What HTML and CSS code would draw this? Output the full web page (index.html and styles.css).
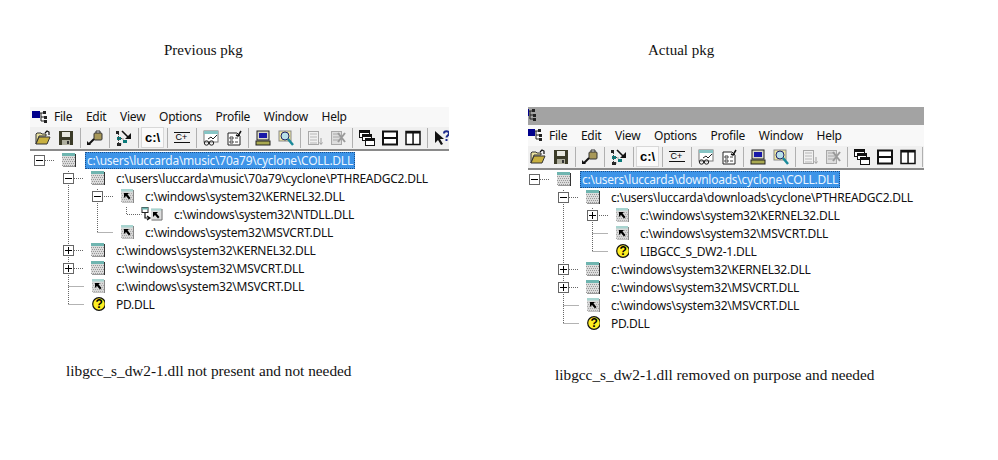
FILE: index.html
```html
<!DOCTYPE html>
<html lang="en">
<head>
  <meta charset="UTF-8" />
  <title>Dependency Walker - pkg comparison</title>
  <link rel="stylesheet" href="styles.css">
</head>
<body>

<svg class="sprites" aria-hidden="true">
  <symbol id="i-app" viewBox="0 0 16 14">
    <rect x="0" y="1" width="8" height="7" fill="#00008c"/>
    <path d="M8 3h3M9 3v8h3M9 7h3" fill="none" stroke="#222"/>
    <rect x="11" y="1" width="3" height="3" fill="#222"/>
    <rect x="12" y="6" width="3" height="3" fill="#222"/>
    <rect x="12" y="10" width="3" height="3" fill="#222"/>
  </symbol>
  <symbol id="i-open" viewBox="0 0 16 16">
    <path d="M1 14V4l1-1h4l1 1h4v2H4L1 14z" fill="#e8e0a0" stroke="#333"/>
    <path d="M1 14l3-7h11l-3 7z" fill="#c8b040" stroke="#333"/>
    <path d="M10 3l2-2 2 1v3" fill="none" stroke="#111" stroke-width="1.2"/>
  </symbol>
  <symbol id="i-save" viewBox="0 0 16 16">
    <rect x="1" y="1" width="14" height="14" fill="#3c3c28"/>
    <rect x="4" y="2" width="8" height="5" fill="#e8e8e0"/>
    <rect x="4" y="10" width="8" height="5" fill="#b0b0a0"/>
    <rect x="9" y="11" width="2" height="3" fill="#333"/>
  </symbol>
  <symbol id="i-pin" viewBox="0 0 16 16">
    <rect x="7" y="3" width="8" height="7" rx="1" fill="#a89858" stroke="#333"/>
    <path d="M9 3V1h4v2" fill="none" stroke="#333"/>
    <path d="M7 9L2 14" stroke="#111" stroke-width="2"/>
    <path d="M0 11v4h4z" fill="#111"/>
  </symbol>
  <symbol id="i-tree" viewBox="0 0 16 16">
    <rect x="0" y="1" width="3" height="3" fill="#222"/>
    <rect x="1" y="7" width="4" height="3" fill="#0a7a7a"/>
    <rect x="1" y="13" width="4" height="3" fill="#222"/>
    <rect x="7" y="10" width="4" height="3" fill="#0a7a7a"/>
    <path d="M2.500 4v10h3M5 8.500h2v2" fill="none" stroke="#444" stroke-dasharray="1 1"/>
    <path d="M6 1l6 6" stroke="#111" stroke-width="1.600"/>
    <path d="M15 3v6h-6z" fill="#111"/>
  </symbol>
  <symbol id="i-watch" viewBox="0 0 16 16">
    <rect x="1" y="1" width="14" height="11" fill="#fff" stroke="#777"/>
    <rect x="1" y="1" width="14" height="3" fill="#86c4c4"/>
    <circle cx="3.500" cy="13" r="2.200" fill="none" stroke="#222"/>
    <circle cx="8.500" cy="13" r="2.200" fill="none" stroke="#222"/>
    <path d="M5.500 12.500h1M5 9l3-2 2 2 4-4" fill="none" stroke="#222"/>
  </symbol>
  <symbol id="i-sheet" viewBox="0 0 16 16">
    <path d="M2 3h9l3 3v9H2z" fill="#fff" stroke="#222"/>
    <path d="M4 7h3v2H4zM4 11h3v2H4zM9 8h3M9 12h3" fill="none" stroke="#444"/>
    <path d="M10 5l2 1 3-5" fill="none" stroke="#111" stroke-width="1.500"/>
  </symbol>
  <symbol id="i-pc" viewBox="0 0 16 16">
    <rect x="2" y="1" width="12" height="9" fill="#d8d8c8" stroke="#222"/>
    <rect x="4" y="3" width="8" height="5" fill="#1818a8"/>
    <rect x="1" y="11" width="14" height="4" fill="#a8a850" stroke="#222"/>
  </symbol>
  <symbol id="i-find" viewBox="0 0 16 16">
    <rect x="1" y="1" width="12" height="10" fill="#f0e8a0" stroke="#888"/>
    <circle cx="7" cy="6" r="4" fill="#b8e0e8" stroke="#226"/>
    <path d="M10 9l5 6" stroke="#1a8a9a" stroke-width="2.500"/>
  </symbol>
  <symbol id="i-off1" viewBox="0 0 16 16">
    <rect x="1.500" y="1.500" width="10" height="13" fill="none" stroke="#a8a8a8"/>
    <path d="M3 4h7M3 7h7M3 10h7M3 13h7" stroke="#b8b8b8"/>
    <path d="M14 8v6M12.500 12.500l1.500 2 1.500-2" fill="none" stroke="#a0a0a0"/>
  </symbol>
  <symbol id="i-off2" viewBox="0 0 16 16">
    <rect x="1.500" y="1.500" width="10" height="13" fill="#ddd" stroke="#a8a8a8"/>
    <path d="M3 4h7M3 7h7M3 10h7" stroke="#a8a8a8"/>
    <path d="M8 3l7 9M15 3l-7 9" stroke="#9a9a9a" stroke-width="2"/>
  </symbol>
  <symbol id="i-cascade" viewBox="0 0 16 16">
    <rect x="0.500" y="0.500" width="10" height="7" fill="#fff" stroke="#111"/>
    <rect x="0.500" y="0.500" width="10" height="2.500" fill="#111"/>
    <rect x="3.500" y="4.500" width="9" height="6" fill="#fff" stroke="#111"/>
    <rect x="3.500" y="4.500" width="9" height="2.500" fill="#111"/>
    <rect x="6.500" y="8.500" width="9" height="7" fill="#fff" stroke="#111"/>
    <rect x="6.500" y="8.500" width="9" height="2.500" fill="#111"/>
  </symbol>
  <symbol id="i-rows" viewBox="0 0 16 16">
    <rect x="1" y="1.500" width="14" height="13" fill="#fff" stroke="#111" stroke-width="2"/>
    <rect x="1" y="7" width="14" height="2" fill="#111"/>
  </symbol>
  <symbol id="i-cols" viewBox="0 0 16 16">
    <rect x="1" y="1.500" width="14" height="13" fill="#fff" stroke="#111" stroke-width="1.500"/>
    <rect x="1" y="1" width="14" height="2.500" fill="#111"/>
    <rect x="7.300" y="2" width="1.500" height="12" fill="#111"/>
  </symbol>
  <symbol id="i-help" viewBox="0 0 16 16">
    <path d="M1 1v12l3-3 3 5 2-1-3-5h4z" fill="#111"/>
    <path d="M10 3.500c0-3 5-3 5 0 0 2-2.500 2-2.500 4M12.500 9v2" fill="none" stroke="#1c2a8c" stroke-width="2"/>
  </symbol>
  <symbol id="i-module" viewBox="0 0 14 14">
    <rect x="0" y="0" width="13" height="13" fill="#dcdcdc"/>
    <path d="M0 4.500h13M1 6.500h12M0 8.500h13M1 10.500h12M0 12.500h13" fill="none" stroke="#989898" stroke-dasharray="1 1"/>
    <rect x="0" y="0" width="13" height="3" fill="#6fb5b0"/>
    <path d="M13.500 1v13H1" fill="none" stroke="#333"/>
  </symbol>
  <symbol id="i-shortcut" viewBox="0 0 14 14">
    <rect x="1" y="0" width="12" height="13" fill="#d8d8d8"/>
    <path d="M1 4.500h12M2 6.500h11M1 8.500h12M2 10.500h11M1 12.500h12" fill="none" stroke="#aaa" stroke-dasharray="1 1"/>
    <rect x="1" y="0" width="12" height="2.500" fill="#a8d4d0"/>
    <path d="M13.500 1v13H2" fill="none" stroke="#888"/>
    <path d="M4 4h5L7.500 5.500 10.500 9 9 10.500 6 7 4 9z" fill="#000"/>
  </symbol>
  <symbol id="i-fwd" viewBox="0 0 22 14">
    <rect x="1" y="0.500" width="6" height="5" fill="#fff" stroke="#222"/>
    <rect x="1" y="0.500" width="6" height="2" fill="#6fb5b0"/>
    <path d="M4 6v5h4M6 9l3 2-3 2" fill="none" stroke="#111" stroke-width="1.200"/>
    <rect x="10" y="1.500" width="10.500" height="11" fill="#dedede"/>
    <rect x="10" y="1.500" width="10.500" height="2" fill="#a8d4d0"/>
    <path d="M21 2v11H10.500" fill="none" stroke="#666"/>
    <path d="M12 5h5L15.500 6.500 18.500 10 17 11.500 14 8 12 10z" fill="#000"/>
  </symbol>
  <symbol id="i-missing" viewBox="0 1 14 14">
    <circle cx="8" cy="8" r="6.300" fill="#ffee22" stroke="#111" stroke-width="1.200"/>
    <text x="8" y="12.300" text-anchor="middle" font-family="Liberation Sans, sans-serif" font-size="12" font-weight="700" fill="#000">?</text>
  </symbol>
</svg>

<div class="page">

  <section class="pkg">
    <h2 class="caption caption-prev">Previous pkg</h2>
    <div class="depends">
      <div class="depends-inner">
        <div class="menubar">
          <svg class="app-icon"><use href="#i-app"/></svg>
          <span>File</span><span>Edit</span><span>View</span><span>Options</span><span>Profile</span><span>Window</span><span>Help</span>
        </div>
        <div class="toolbar">
          <span class="tb"><svg><use href="#i-open"/></svg></span>
          <span class="tb"><svg><use href="#i-save"/></svg></span>
          <i class="sep"></i>
          <span class="tb"><svg><use href="#i-pin"/></svg></span>
          <i class="sep"></i>
          <span class="tb"><svg><use href="#i-tree"/></svg></span>
          <i class="sep"></i>
          <span class="tb tb-on tb-path">c:\</span>
          <i class="sep"></i>
          <span class="tb"><span class="tb-cpp">C+</span></span>
          <i class="sep"></i>
          <span class="tb"><svg><use href="#i-watch"/></svg></span>
          <span class="tb"><svg><use href="#i-sheet"/></svg></span>
          <i class="sep"></i>
          <span class="tb"><svg><use href="#i-pc"/></svg></span>
          <span class="tb"><svg><use href="#i-find"/></svg></span>
          <i class="sep"></i>
          <span class="tb"><svg><use href="#i-off1"/></svg></span>
          <span class="tb"><svg><use href="#i-off2"/></svg></span>
          <i class="sep"></i>
          <span class="tb"><svg><use href="#i-cascade"/></svg></span>
          <span class="tb"><svg><use href="#i-rows"/></svg></span>
          <span class="tb"><svg><use href="#i-cols"/></svg></span>
          <i class="sep"></i>
          <span class="tb"><svg><use href="#i-help"/></svg></span>
        </div>
        <div class="tree">
          <svg class="tree-lines">
            <path d="M15 9.500h10M38.500 20V153.500M44 27.500h10M67.500 38V81.500M74 45.500h9M96.500 56V63.500h15M67.500 81.500h15M44 99.500h10M44 117.500h10M38.500 135.500h15M38.500 153.500h15"/>
          </svg>
          <div class="row lvl0"><b class="exp"></b><svg class="ic"><use href="#i-module"/></svg><span class="name selected">c:\users\luccarda\music\70a79\cyclone\COLL.DLL</span></div>
          <div class="row lvl1"><b class="exp"></b><svg class="ic"><use href="#i-module"/></svg><span class="name">c:\users\luccarda\music\70a79\cyclone\PTHREADGC2.DLL</span></div>
          <div class="row lvl2"><b class="exp"></b><svg class="ic"><use href="#i-shortcut"/></svg><span class="name">c:\windows\system32\KERNEL32.DLL</span></div>
          <div class="row lvl3"><b class="exp-none"></b><svg class="ic ic-fwd"><use href="#i-fwd"/></svg><span class="name">c:\windows\system32\NTDLL.DLL</span></div>
          <div class="row lvl2"><b class="exp-none"></b><svg class="ic"><use href="#i-shortcut"/></svg><span class="name">c:\windows\system32\MSVCRT.DLL</span></div>
          <div class="row lvl1"><b class="exp plus"></b><svg class="ic"><use href="#i-module"/></svg><span class="name">c:\windows\system32\KERNEL32.DLL</span></div>
          <div class="row lvl1"><b class="exp plus"></b><svg class="ic"><use href="#i-module"/></svg><span class="name">c:\windows\system32\MSVCRT.DLL</span></div>
          <div class="row lvl1"><b class="exp-none"></b><svg class="ic"><use href="#i-shortcut"/></svg><span class="name">c:\windows\system32\MSVCRT.DLL</span></div>
          <div class="row lvl1"><b class="exp-none"></b><svg class="ic"><use href="#i-missing"/></svg><span class="name">PD.DLL</span></div>
        </div>
      </div>
    </div>
    <p class="caption note note-prev">libgcc_s_dw2-1.dll not present and not needed</p>
  </section>

  <section class="pkg pkg-actual">
    <h2 class="caption caption-actual">Actual pkg</h2>
    <div class="depends">
      <div class="titlebar"><svg class="app-icon"><use href="#i-app"/></svg></div>
      <div class="depends-inner">
        <div class="menubar">
          <svg class="app-icon"><use href="#i-app"/></svg>
          <span>File</span><span>Edit</span><span>View</span><span>Options</span><span>Profile</span><span>Window</span><span>Help</span>
        </div>
        <div class="toolbar">
          <span class="tb"><svg><use href="#i-open"/></svg></span>
          <span class="tb"><svg><use href="#i-save"/></svg></span>
          <i class="sep"></i>
          <span class="tb"><svg><use href="#i-pin"/></svg></span>
          <i class="sep"></i>
          <span class="tb"><svg><use href="#i-tree"/></svg></span>
          <i class="sep"></i>
          <span class="tb tb-on tb-path">c:\</span>
          <i class="sep"></i>
          <span class="tb"><span class="tb-cpp">C+</span></span>
          <i class="sep"></i>
          <span class="tb"><svg><use href="#i-watch"/></svg></span>
          <span class="tb"><svg><use href="#i-sheet"/></svg></span>
          <i class="sep"></i>
          <span class="tb"><svg><use href="#i-pc"/></svg></span>
          <span class="tb"><svg><use href="#i-find"/></svg></span>
          <i class="sep"></i>
          <span class="tb"><svg><use href="#i-off1"/></svg></span>
          <span class="tb"><svg><use href="#i-off2"/></svg></span>
          <i class="sep"></i>
          <span class="tb"><svg><use href="#i-cascade"/></svg></span>
          <span class="tb"><svg><use href="#i-rows"/></svg></span>
          <span class="tb"><svg><use href="#i-cols"/></svg></span>
          <i class="sep"></i>
        </div>
        <div class="tree">
          <svg class="tree-lines">
            <path d="M15 9.500h10M38.500 20V153.500M44 27.500h10M67.500 38V81.500M74 45.500h9M67.500 63.500h15M67.500 81.500h15M44 99.500h10M44 117.500h10M38.500 135.500h15M38.500 153.500h15"/>
          </svg>
          <div class="row lvl0"><b class="exp"></b><svg class="ic"><use href="#i-module"/></svg><span class="name selected">c:\users\luccarda\downloads\cyclone\COLL.DLL</span></div>
          <div class="row lvl1"><b class="exp"></b><svg class="ic"><use href="#i-module"/></svg><span class="name">c:\users\luccarda\downloads\cyclone\PTHREADGC2.DLL</span></div>
          <div class="row lvl2"><b class="exp plus"></b><svg class="ic"><use href="#i-shortcut"/></svg><span class="name">c:\windows\system32\KERNEL32.DLL</span></div>
          <div class="row lvl2"><b class="exp-none"></b><svg class="ic"><use href="#i-shortcut"/></svg><span class="name">c:\windows\system32\MSVCRT.DLL</span></div>
          <div class="row lvl2"><b class="exp-none"></b><svg class="ic"><use href="#i-missing"/></svg><span class="name">LIBGCC_S_DW2-1.DLL</span></div>
          <div class="row lvl1"><b class="exp plus"></b><svg class="ic"><use href="#i-module"/></svg><span class="name">c:\windows\system32\KERNEL32.DLL</span></div>
          <div class="row lvl1"><b class="exp plus"></b><svg class="ic"><use href="#i-module"/></svg><span class="name">c:\windows\system32\MSVCRT.DLL</span></div>
          <div class="row lvl1"><b class="exp-none"></b><svg class="ic"><use href="#i-shortcut"/></svg><span class="name">c:\windows\system32\MSVCRT.DLL</span></div>
          <div class="row lvl1"><b class="exp-none"></b><svg class="ic"><use href="#i-missing"/></svg><span class="name">PD.DLL</span></div>
        </div>
      </div>
    </div>
    <p class="caption note note-actual">libgcc_s_dw2-1.dll removed on purpose and needed</p>
  </section>

</div>

</body>
</html>
```

FILE: styles.css
```css
* {
  box-sizing: border-box;
}

html, body {
  margin: 0;
  padding: 0;
  height: 100%;
  overflow: hidden;
  background: #fff;
}

.sprites {
  display: none;
}

.page {
  display: grid;
  grid-template-columns: 419px 396px;
  column-gap: 79px;
  padding: 42px 0 0 30px;
}

/* captions */
.caption {
  margin: 0;
  font-family: "Liberation Serif", serif;
  font-size: 15px;
  font-weight: 400;
  line-height: 16px;
  color: #111;
  white-space: nowrap;
}

.note {
  font-size: 15.3px;
}

.caption-prev { padding-left: 134px; margin-bottom: 49px; }
.caption-actual { padding-left: 120px; margin-bottom: 49px; }
.note-prev { margin: 49px 0 0 36px; }
.note-actual { margin: 34px 0 0 27px; }

/* app window */
.depends {
  overflow: hidden;
  font-family: "Noto Sans", sans-serif;
  font-size: 12px;
  letter-spacing: -0.25px;
  color: #111;
}

.pkg-actual .depends-inner {
  margin-left: -3px;
  width: 419px;
}

.titlebar {
  height: 18px;
  padding-top: 1px;
  background: #a3a3a3;
}

.titlebar .app-icon {
  margin-left: -7px;
}

.app-icon {
  display: block;
  width: 16px;
  height: 14px;
  flex: none;
}

.menubar {
  display: flex;
  align-items: center;
  height: 20px;
  padding: 0 0 1px 2px;
  background: #f8f8f8;
}

.pkg-actual .menubar {
  height: 21px;
}

.menubar span {
  padding: 0 6px;
  margin-right: 1.7px;
}

.toolbar {
  display: flex;
  align-items: center;
  height: 24px;
  padding: 0 0 1px 1px;
  background: #f0f0f0;
  border-bottom: 2px solid #8a8a8a;
}

.tb {
  display: flex;
  align-items: center;
  justify-content: center;
  width: 23px;
  height: 21px;
  flex: none;
}

.tb svg {
  width: 16px;
  height: 16px;
}

.tb-on {
  background: #fafafa;
  border: 1px solid #d8d8d8;
}

.tb-path {
  font-family: "Liberation Sans", sans-serif;
  font-size: 13px;
  font-weight: 700;
  letter-spacing: 0;
  color: #000;
}

.tb-cpp {
  width: 16px;
  font-family: "Liberation Sans", sans-serif;
  font-size: 9px;
  line-height: 9px;
  letter-spacing: 0;
  text-align: center;
  border-top: 1px solid #111;
  border-bottom: 1px solid #111;
  color: #000;
}

.sep {
  width: 6px;
  height: 20px;
  flex: none;
  background: linear-gradient(#b0b0b0, #b0b0b0) center / 1px 100% no-repeat;
}

/* dependency tree */
.tree {
  position: relative;
  background: #fff;
  padding-bottom: 1px;
}

.tree-lines {
  position: absolute;
  top: 0;
  left: 0;
  width: 100%;
  height: 100%;
}

.tree-lines path {
  fill: none;
  stroke: #666;
  stroke-dasharray: 1 1;
}

.row {
  position: relative;
  display: flex;
  align-items: center;
  height: 18px;
  white-space: nowrap;
}

.lvl0 { padding-left: 4px; }
.lvl1 { padding-left: 33px; }
.lvl2 { padding-left: 62px; }
.lvl3 { padding-left: 91px; }

.exp,
.exp-none {
  position: relative;
  display: block;
  width: 11px;
  height: 11px;
  flex: none;
  margin-right: 17px;
}

.exp {
  background: #fff;
  border: 1px solid #666;
}

.exp::before {
  content: "";
  position: absolute;
  left: 1px;
  top: 4px;
  width: 7px;
  height: 1px;
  background: #000;
}

.exp.plus::after {
  content: "";
  position: absolute;
  left: 4px;
  top: 1px;
  width: 1px;
  height: 7px;
  background: #000;
}

.ic {
  display: block;
  width: 14px;
  height: 14px;
  flex: none;
  margin-right: 11px;
}

.ic-fwd {
  width: 22px;
  margin-left: -8px;
}

.selected {
  margin: 0 -2px;
  padding: 0 2px;
  line-height: 17px;
  background: #3d94e8;
  color: #eaf4ff;
  outline: 1px dotted #1b4f8a;
  outline-offset: -1px;
}
```
